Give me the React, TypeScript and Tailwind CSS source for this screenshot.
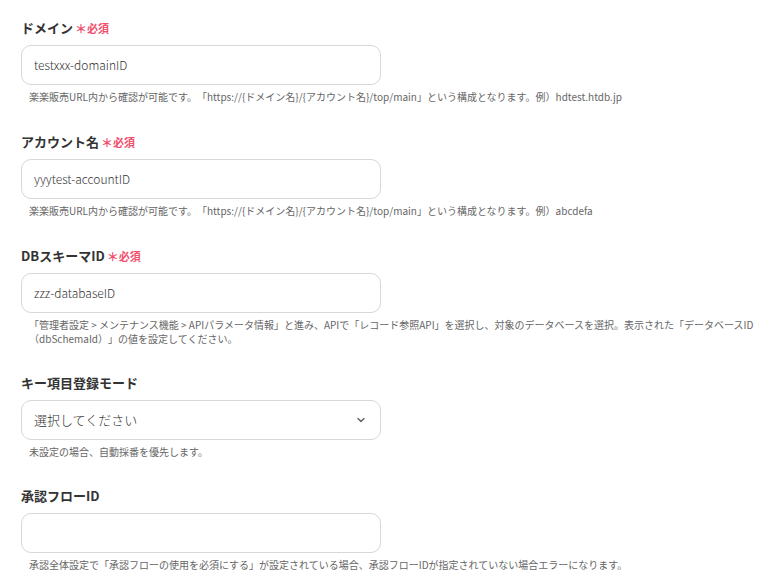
import React from 'react';

const font = { fontFamily: '"Noto Sans CJK JP", "Noto Sans", sans-serif' };

type FieldProps = {
  label: string;
  required?: boolean;
  value?: string;
  help: string;
  select?: boolean;
  tight?: boolean;
};

const Field: React.FC<FieldProps> = ({ label, required, value, help, select, tight }) => (
  <div className={tight ? 'mb-[28px]' : 'mb-[29px]'}>
    <div className="flex items-center h-[18px] mb-[8px]">
      <span className="text-[13px] font-bold text-[#333333]">{label}</span>
      {required && (
        <span className="ml-[2px] flex items-center text-[11px] font-bold text-[#f0506e]">
          <span className="text-[12px] leading-none mt-[2px]">＊</span>
          必須
        </span>
      )}
    </div>
    <div
      className={
        'w-[360px] h-[40px] rounded-[10px] border border-[#d4d7dc] bg-white flex items-center px-[12px] font-light text-[#333333] ' +
        (select ? 'text-[13px]' : 'text-[12px]')
      }
    >
      <span className="flex-1">{value}</span>
      {select && (
        <svg width="12" height="12" viewBox="0 0 24 24" fill="none" stroke="#666" strokeWidth="3" strokeLinecap="round" strokeLinejoin="round" className="mr-[1px]">
          <path d="M6 9l6 6 6-6" />
        </svg>
      )}
    </div>
    <p className="mt-[5px] pl-[8px] pr-[8px] text-[10px] leading-[14px] text-[#666666] [text-spacing-trim:space-all]">{help}</p>
  </div>
);

const App: React.FC = () => {
  return (
    <div className="min-h-screen bg-white pl-[21px] pr-[12px] pt-[19px]" style={font}>
      <Field
        label="ドメイン"
        required
        value="testxxx-domainID"
        help="楽楽販売URL内から確認が可能です。「https://{ドメイン名}/{アカウント名}/top/main」という構成となります。例）hdtest.htdb.jp"
      />
      <Field
        label="アカウント名"
        required
        value="yyytest-accountID"
        help="楽楽販売URL内から確認が可能です。「https://{ドメイン名}/{アカウント名}/top/main」という構成となります。例）abcdefa"
      />
      <Field
        label="DBスキーマID"
        required
        tight
        value="zzz-databaseID"
        help="「管理者設定 > メンテナンス機能 > APIパラメータ情報」と進み、APIで「レコード参照API」を選択し、対象のデータベースを選択。表示された「データベースID（dbSchemaId）」の値を設定してください。"
      />
      <Field label="キー項目登録モード" tight value="選択してください" select help="未設定の場合、自動採番を優先します。" />
      <Field
        label="承認フローID"
        value=""
        help="承認全体設定で「承認フローの使用を必須にする」が設定されている場合、承認フローIDが指定されていない場合エラーになります。"
      />
    </div>
  );
};

export default App;
